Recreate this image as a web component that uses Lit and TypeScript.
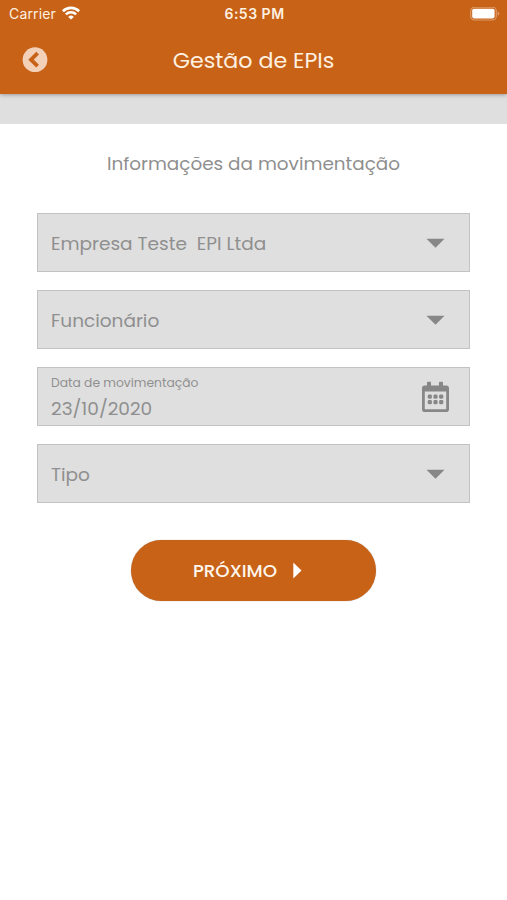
import { LitElement, html, css, svg, nothing } from "lit";
import { customElement, property } from "lit/decorators.js";

@customElement("status-bar")
class StatusBar extends LitElement {
  static styles = css`
    :host {
      display: grid;
      grid-template-columns: 1fr auto 1fr;
      align-items: center;
      height: 27px;
      padding: 0 7px 0 9px;
      color: #fff0e0;
      font-family: Inter, "Liberation Sans", sans-serif;
      font-size: 14px;
      line-height: 27px;
    }
    .left { display: flex; align-items: center; gap: 6px; }
    .carrier { letter-spacing: 0.15px; }
    .time { font-weight: 600; font-size: 14px; letter-spacing: 0.5px; }
    .battery { justify-self: end; }
    svg { display: block; }
    .wifi { margin-top: -2px; }
  `;
  render() {
    return html`
      <div class="left">
        <span class="carrier">Carrier</span>
        <svg class="wifi" width="18" height="14" viewBox="0 0 18 14" fill="none" stroke="#fff" stroke-width="2.6">
          <path d="M0.9 5.2a11.6 11.6 0 0 1 16.2 0" />
          <path d="M3.9 8.4a7.3 7.3 0 0 1 10.2 0" />
          <path d="M9 13.6L6.2 10.9a4 4 0 0 1 5.6 0z" fill="#fff" stroke="none" />
        </svg>
      </div>
      <span class="time">6:53 PM</span>
      <svg class="battery" width="30" height="14" viewBox="0 0 30 14">
        <rect x="0.7" y="0.2" width="25.6" height="12.8" rx="3.8" fill="none" stroke="#dc9a68" stroke-width="1.2" />
        <rect x="2.2" y="1.8" width="22.4" height="9.6" rx="1.8" fill="#fff" />
        <path d="M27.6 4.4v4.4c1.2-.5 1.8-1.2 1.8-2.2s-.6-1.7-1.8-2.2z" fill="#dc9a68" />
      </svg>
    `;
  }
}

@customElement("form-field")
class FormField extends LitElement {
  @property() label = "";
  @property() value = "";
  @property() icon = "caret";

  static styles = css`
    :host {
      box-sizing: border-box;
      display: flex;
      align-items: center;
      justify-content: space-between;
      height: 59px;
      padding: 0 19px 0 13px;
      border: 1px solid #c2c3c3;
      background: #dfdfdf;
      color: #8f8f8f;
    }
    .text { display: flex; flex-direction: column; white-space: pre; }
    .label { font-size: 12.3px; line-height: 18px; margin-top: -1px; }
    .value { font-size: 18.5px; line-height: 28px; padding-top: 2px; }
    .label + .value { line-height: 32px; padding-top: 1px; margin-bottom: -6px; }
    svg { display: block; }
  `;
  render() {
    return html`
      <div class="text">
        ${this.label ? html`<span class="label">${this.label}</span>` : nothing}
        <span class="value">${this.value}</span>
      </div>
      ${this.icon === "caret" ? this.caret() : this.calendar()}
    `;
  }
  caret() {
    return html`<svg width="30" height="10" viewBox="0 0 30 10"><path d="M6.5 0.8h18l-9 9z" fill="#878787" /></svg>`;
  }
  calendar() {
    const dots = [9.8, 15.5, 21.2].map((x) =>
      [15.6, 21.2].map((y) => svg`<rect x=${x - 2.1} y=${y - 2.1} width="4.2" height="4.2" rx="1.4" />`)
    );
    return html`<svg width="30" height="32" viewBox="0 0 30 32" fill="#878787">
      <path fill-rule="evenodd" d="M4.8 4.5H7V1.5a.8.8 0 0 1 .8-.8h2.400a.8.8 0 0 1 .8.8V4.500h8V1.500a.8.8 0 0 1 .8-.8h2.400a.8.8 0 0 1 .8.8V4.500h3.200a2.800 2.800 0 0 1 2.800 2.800v21a2.800 2.800 0 0 1-2.800 2.800H4.800a2.800 2.800 0 0 1-2.800-2.800v-21a2.800 2.800 0 0 1 2.800-2.800zM4.800 10.500v17.200a.6.6 0 0 0 .6.6h20.200a.6.6 0 0 0 .6-.6V10.500z" />
      ${dots}
    </svg>`;
  }
}

@customElement("app-root")
class AppRoot extends LitElement {
  static styles = css`
    :host {
      display: flex;
      flex-direction: column;
      min-height: 100vh;
      background: #fff;
      font-family: Poppins, Inter, "Liberation Sans", sans-serif;
    }
    header {
      position: relative;
      height: 94px;
      background: #c76217;
      box-shadow: 0 1px 4px rgba(0, 0, 0, 0.3);
    }
    .nav {
      display: grid;
      grid-template-columns: 1fr auto 1fr;
      align-items: center;
      height: 66px;
      padding: 0 22px;
    }
    .nav svg { display: block; }
    h1 {
      margin: 1px 0 0;
      color: #fff0e0;
      font-size: 22.2px;
      font-weight: 400;
      line-height: 30px;
    }
    .strip { height: 30px; background: #dfdfdf; }
    main { display: flex; flex-direction: column; align-items: center; padding: 25px 37px 0; }
    h2 {
      margin: 0 0 34px;
      color: #8f8f8f;
      font-size: 18.4px;
      font-weight: 400;
      line-height: 30px;
    }
    .fields { display: flex; flex-direction: column; gap: 18px; width: 100%; }
    .next {
      box-sizing: border-box;
      display: flex;
      align-items: center;
      justify-content: center;
      gap: 16px;
      width: 245px;
      height: 61px;
      margin: 37px 0 0;
      padding: 0 12px 0 0;
      border: 0;
      border-radius: 31px;
      background: #c76217;
      color: #fff6ec;
      font: inherit;
      font-size: 18.3px;
      font-weight: 500;
      box-shadow: 0 0 1px rgba(90, 50, 20, 0.5);
    }
  `;
  render() {
    return html`
      <header>
        <status-bar></status-bar>
        <div class="nav">
          <svg width="26" height="26" viewBox="0 0 26 26">
            <circle cx="13" cy="12.7" r="12.4" fill="#f3d0b8" />
            <path d="M15.6 6.2L9 12.7l6.6 6.5" fill="none" stroke="#c76217" stroke-width="3.8" />
          </svg>
          <h1>Gestão de EPIs</h1>
        </div>
      </header>
      <div class="strip"></div>
      <main>
        <h2>Informações da movimentação</h2>
        <div class="fields">
          <form-field .value=${"Empresa Teste  EPI Ltda"}></form-field>
          <form-field value="Funcionário"></form-field>
          <form-field label="Data de movimentação" value="23/10/2020" icon="calendar"></form-field>
          <form-field value="Tipo"></form-field>
        </div>
        <button class="next">
          <span>PRÓXIMO</span>
          <svg width="9" height="17" viewBox="0 0 9 17"><path d="M0.3 0.5v16l8.2-8z" fill="#fff" /></svg>
        </button>
      </main>
    `;
  }
}
